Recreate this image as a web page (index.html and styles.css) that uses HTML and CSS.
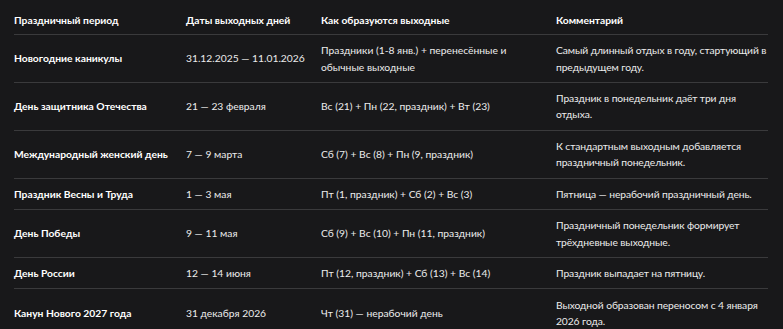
FILE: index.html
```html
<!DOCTYPE html>
<html lang="ru">
<head>
<meta charset="utf-8">
<title>Праздники 2026</title>
<link rel="stylesheet" href="styles.css">
</head>
<body>
<div class="wrap">
<table class="holidays">
<colgroup>
<col class="c1"><col class="c2"><col class="c3"><col class="c4">
</colgroup>
<thead>
<tr><th>Праздничный период</th><th>Даты выходных дней</th><th>Как образуются выходные</th><th>Комментарий</th></tr>
</thead>
<tbody>
<tr><td class="name">Новогодние каникулы</td><td>31.12.2025 — 11.01.2026</td><td>Праздники (1-8 янв.) + перенесённые и обычные выходные</td><td>Самый длинный отдых в году, стартующий в предыдущем году.</td></tr>
<tr><td class="name">День защитника Отечества</td><td>21 — 23 февраля</td><td>Вс (21) + Пн (22, праздник) + Вт (23)</td><td>Праздник в понедельник даёт три дня отдыха.</td></tr>
<tr><td class="name">Международный женский день</td><td>7 — 9 марта</td><td>Сб (7) + Вс (8) + Пн (9, праздник)</td><td>К стандартным выходным добавляется праздничный понедельник.</td></tr>
<tr><td class="name">Праздник Весны и Труда</td><td>1 — 3 мая</td><td>Пт (1, праздник) + Сб (2) + Вс (3)</td><td>Пятница — нерабочий праздничный день.</td></tr>
<tr><td class="name">День Победы</td><td>9 — 11 мая</td><td>Сб (9) + Вс (10) + Пн (11, праздник)</td><td>Праздничный понедельник формирует трёхдневные выходные.</td></tr>
<tr><td class="name">День России</td><td>12 — 14 июня</td><td>Пт (12, праздник) + Сб (13) + Вс (14)</td><td>Праздник выпадает на пятницу.</td></tr>
<tr><td class="name">Канун Нового 2027 года</td><td>31 декабря 2026</td><td>Чт (31) — нерабочий день</td><td>Выходной образован переносом с 4 января 2026 года.</td></tr>
</tbody>
</table>
</div>
</body>
</html>
```
FILE: styles.css
```css
html, body {
  margin: 0;
  background: #18181a;
}
body {
  font-family: Lato, Roboto, "Liberation Sans", sans-serif;
  font-size: 10.3px;
  color: #ececec;
}
.wrap {
  padding: 6px 15px 0 14px;
}
.holidays {
  width: 754px;
  border-collapse: collapse;
  table-layout: fixed;
}
.c1 { width: 172px; }
.c2 { width: 135px; }
.c3 { width: 235px; }
.c4 { width: 212px; }
.holidays th,
.holidays td {
  text-align: left;
  vertical-align: middle;
  padding: 7.2px 4px 7.2px 0;
  line-height: 16.2px;
  border-bottom: 1px solid #3a3a3c;
}
.holidays th:last-child,
.holidays td:last-child {
  padding-right: 0;
}
.holidays td:last-child {
  letter-spacing: -0.1px;
}
.holidays th {
  font-weight: 700;
  color: #ffffff;
  padding-top: 6px;
  padding-bottom: 6px;
}
.holidays td.name {
  font-weight: 700;
  color: #ffffff;
}
```
